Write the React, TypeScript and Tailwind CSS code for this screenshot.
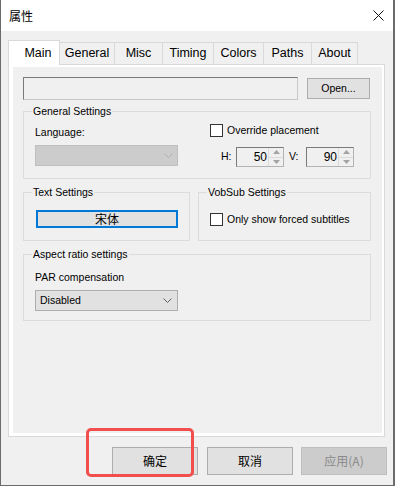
import type { ReactNode } from "react";

const ui = "font-['Liberation_Sans','Noto_Sans_CJK_SC',sans-serif]";
const cjk = "font-['Noto_Sans_CJK_SC',sans-serif]";

const tabs: [string, string][] = [
  ["Main", "w-[52px] pl-[8px]"],
  ["General", "w-[56px]"],
  ["Misc", "w-[49px]"],
  ["Timing", "w-[52px]"],
  ["Colors", "w-[51px]"],
  ["Paths", "w-[49px]"],
  ["About", "w-[47px]"]
];

function GroupBox({ label, className, children }: { label: string; className: string; children?: ReactNode }) {
  return (
    <div className={`relative border border-[#dcdcdc] ${className}`}>
      <span className="absolute -top-[8px] left-[8px] bg-[#f0f0f0] px-px text-[10.5px] leading-[14px] text-black">{label}</span>
      {children}
    </div>
  );
}

function Checkbox({ label }: { label: string }) {
  return (
    <div className="flex h-[13px] items-center">
      <span className="h-[13px] w-[13px] border border-[#333333] bg-white" />
      <span className="ml-[4px] text-[10.5px] leading-[13px] text-black">{label}</span>
    </div>
  );
}

function Chevron({ color }: { color: string }) {
  return (
    <svg width="9" height="5" viewBox="0 0 9 5" aria-hidden="true">
      <path d="M0.5 0.5 L4.5 4.5 L8.5 0.5" fill="none" stroke={color} strokeWidth="1" />
    </svg>
  );
}

function Spin({ value }: { value: string }) {
  return (
    <div className="flex h-[20px] w-[48px] border border-t-[#7a7a7a] border-l-[#7a7a7a] border-r-[#b4b4b4] border-b-[#b4b4b4] bg-[#f0f0f0]">
      <span className="flex-1 pr-[1px] text-right text-[12px] leading-[18px] text-black">{value}</span>
      <div className="flex w-[15px] flex-col border-l border-[#dcdcdc] bg-[#f0f0f0]">
        <div className="flex flex-1 items-center justify-center border-b border-[#dcdcdc]">
          <svg width="7" height="4" viewBox="0 0 7 4" aria-hidden="true">
            <path d="M0 4 L3.5 0 L7 4 Z" fill="#a3a3a3" />
          </svg>
        </div>
        <div className="flex flex-1 items-center justify-center">
          <svg width="7" height="4" viewBox="0 0 7 4" aria-hidden="true">
            <path d="M0 0 L3.5 4 L7 0 Z" fill="#a3a3a3" />
          </svg>
        </div>
      </div>
    </div>
  );
}

export default function App() {
  return (
    <div className={`relative flex h-[486px] w-[395px] flex-col border-l border-r-2 border-b border-[#6b6b6b] bg-[#f0f0f0] ${ui}`}>
      {/* title bar */}
      <div className="flex h-[31px] items-center justify-between bg-white pl-[8px] pr-[9px]">
        <span className={`${cjk} text-[12px] leading-[16px] text-black`}>属性</span>
        <svg width="11" height="11" viewBox="0 0 11 11" aria-hidden="true">
          <path d="M0.5 0.5 L10.5 10.5 M10.5 0.5 L0.5 10.5" stroke="#111111" strokeWidth="1" />
        </svg>
      </div>

      {/* tabs */}
      <div className="ml-[7px] mt-[9px] flex h-[24px] items-end">
        {tabs.map(([name, size], i) =>
          i === 0 ? (
            <div
              key={name}
              className={`relative z-10 -mb-px flex h-[25px] items-center justify-center border border-b-0 border-[#d9d9d9] bg-white text-[12.5px] text-black ${size}`}
            >
              {name}
            </div>
          ) : (
            <div
              key={name}
              className={`-ml-px flex h-[22px] items-center justify-center border border-b-0 border-[#d9d9d9] bg-[#f0f0f0] text-[12.5px] text-black ${size}`}
            >
              {name}
            </div>
          )
        )}
      </div>

      {/* panel */}
      <div className="ml-[7px] flex h-[373px] w-[377px] border border-[#d9d9d9] bg-white pb-[2px] pl-[3px] pr-[2px] pt-[2px]">
        <div className="flex flex-1 flex-col border-b border-l border-white bg-[#f0f0f0] pl-[10px] pt-[10px]">
          <div className="flex items-center">
            <div className="h-[23px] w-[275px] border border-t-[#7a7a7a] border-l-[#7a7a7a] border-r-[#c8c8c8] border-b-[#c8c8c8] bg-[#f0f0f0]" />
            <div className="ml-[9px] flex h-[21px] w-[63px] items-center justify-center border border-[#adadad] bg-[#e1e1e1] text-[10.5px] text-black">
              Open...
            </div>
          </div>

          <GroupBox label="General Settings" className="mt-[11px] flex h-[68px] w-[348px]">
            <div className="flex flex-col pl-[11px] pt-[13px]">
              <span className="text-[10.5px] leading-[14px] text-black">Language:</span>
              <div className="mt-[6px] flex h-[21px] w-[143px] items-center justify-end border border-[#bfbfbf] bg-[#cccccc] pr-[4px]">
                <Chevron color="#b0b0b0" />
              </div>
            </div>
            <div className="ml-[32px] flex flex-col pt-[12px]">
              <Checkbox label="Override placement" />
              <div className="ml-[11px] mt-[10px] flex items-center text-[10.5px] text-black">
                <span className="w-[15px]">H:</span>
                <Spin value="50" />
                <span className="ml-[5px] w-[17px]">V:</span>
                <Spin value="90" />
              </div>
            </div>
          </GroupBox>

          <div className="mt-[13px] flex">
            <GroupBox label="Text Settings" className="h-[49px] w-[167px]">
              <div className="ml-[12px] mt-[17px] flex h-[18px] w-[142px] items-center justify-center border-2 border-[#0078d7] bg-[#e1e1e1]">
                <span className={`${cjk} text-[12px] leading-[14px] text-black`}>宋体</span>
              </div>
            </GroupBox>
            <GroupBox label="VobSub Settings" className="ml-[8px] h-[49px] w-[173px]">
              <div className="ml-[11px] mt-[20px]">
                <Checkbox label="Only show forced subtitles" />
              </div>
            </GroupBox>
          </div>

          <GroupBox label="Aspect ratio settings" className="mt-[13px] h-[67px] w-[348px]">
            <div className="flex flex-col pl-[11px] pt-[15px]">
              <span className="text-[10.5px] leading-[14px] text-black">PAR compensation</span>
              <div className="mt-[6px] flex h-[21px] w-[143px] items-center justify-between border border-[#adadad] bg-[#e1e1e1] pl-[4px] pr-[5px]">
                <span className="text-[10.5px] text-black">Disabled</span>
                <Chevron color="#606060" />
              </div>
            </div>
          </GroupBox>
        </div>
      </div>

      {/* buttons */}
      <div className={`${cjk} ml-[111px] mt-[10px] flex gap-[9px] text-[12px]`}>
        <div className="flex h-[28px] w-[86px] items-center justify-center border border-[#adadad] bg-[#e1e1e1] text-black">确定</div>
        <div className="flex h-[28px] w-[86px] items-center justify-center border border-[#adadad] bg-[#e1e1e1] text-black">取消</div>
        <div className="-ml-px flex h-[28px] w-[86px] items-center justify-center border border-[#bfbfbf] bg-[#cccccc] text-[#8a8a8a]">应用(A)</div>
      </div>

      {/* highlight annotation */}
      <div className="absolute left-[85px] top-[428px] h-[49px] w-[108px] rounded-[5px] border-[3px] border-[#f24e4e]" />
    </div>
  );
}
